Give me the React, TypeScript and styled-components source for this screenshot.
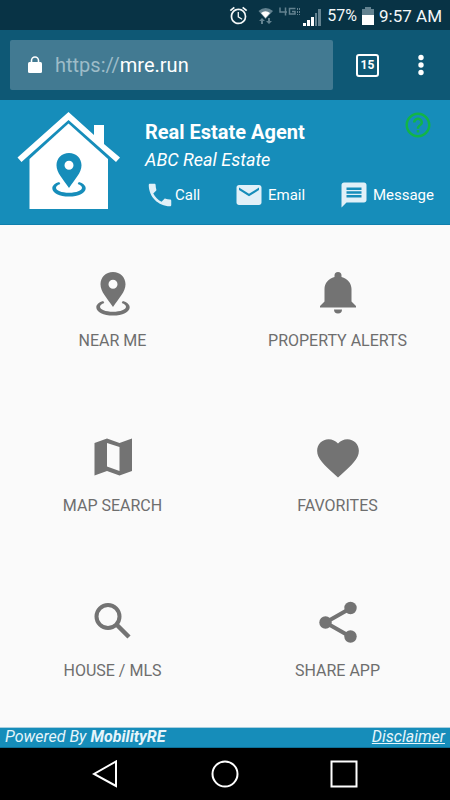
import React from "react";
import styled, { createGlobalStyle } from "styled-components";

const GlobalStyle = createGlobalStyle`
  *, *::before, *::after { box-sizing: border-box; }
  body { margin: 0; background: #fafafa; font-family: Roboto, sans-serif; }
  button { border: 0; padding: 0; margin: 0; background: none; font: inherit; color: inherit; cursor: pointer; }
  svg { display: block; flex: none; }
`;

const Screen = styled.div`
  display: flex;
  flex-direction: column;
  min-height: 100vh;
`;

const StatusBar = styled.div`
  display: flex;
  align-items: center;
  justify-content: flex-end;
  height: 30px;
  padding: 1px 8px 0 0;
  background: #083345;
  color: #f4f8f9;
`;

const Battery = styled.span`
  margin: 0 5px 0 4px;
  font-size: 16px;
  display: flex;
  align-items: center;
  gap: 5px;
`;

const Clock = styled.span`
  font-size: 17px;
`;

const StatusIcons = styled.div`
  display: flex;
  align-items: center;
  gap: 6px;
`;

const BrowserBar = styled.div`
  display: flex;
  align-items: center;
  height: 70px;
  padding: 0 19px 0 10px;
  background: #0e5875;
  color: #fff;
`;

const AddressField = styled.label`
  display: flex;
  align-items: center;
  flex: 1;
  min-width: 0;
  height: 50px;
  padding-left: 18px;
  border-radius: 2px;
  background: #427a92;
  font-size: 20px;
`;

const Scheme = styled.span`
  margin-left: 13px;
  color: #9dbcc8;
`;

const AddressInput = styled.input`
  flex: 1;
  min-width: 0;
  padding: 0;
  border: 0;
  outline: 0;
  background: transparent;
  color: #fff;
  font: inherit;
`;

const TabCount = styled.button`
  margin: 0 32px 0 23px;
`;

const TabFrame = styled.span`
  display: block;
  width: 23px;
  height: 23px;
  border: 2px solid #fff;
  border-radius: 3px;
  font-size: 12px;
  font-weight: 700;
  line-height: 19px;
`;

const AgentHeader = styled.header`
  display: flex;
  align-items: flex-start;
  height: 125px;
  padding: 11px 16px 0 17px;
  background: #168dba;
  border-bottom: 1px solid #0f7fad;
  color: #fff;
`;

const AgentDetails = styled.div`
  flex: 1;
  min-width: 0;
  padding-top: 8px;
  margin-left: 24px;
`;

const AgentTop = styled.div`
  display: flex;
  justify-content: space-between;
`;

const AgentName = styled.h1`
  margin: 0;
  font-size: 20px;
  line-height: 26px;
  font-weight: 700;
`;

const HelpButton = styled.button`
  height: 26px;
  margin: -9px 1px 0 0;
  color: #12b546;
`;

const Company = styled.p`
  margin: 2px 0 0;
  font-size: 18px;
  line-height: 26px;
  font-style: italic;
`;

const ContactRow = styled.div`
  display: flex;
  justify-content: space-between;
  margin-top: 7px;
`;

const ContactButton = styled.button<{ $gap: number }>`
  display: flex;
  align-items: center;
  gap: ${(p) => p.$gap}px;
  height: 30px;
  font-size: 15px;

  svg { color: #e1f0f8; }
`;

const Menu = styled.main`
  display: grid;
  flex: 1;
  grid-template-columns: 1fr 1fr;
  grid-auto-rows: 1fr;
  padding: 3px 0 4px;
  background: #fafafa;
`;

const MenuItem = styled.button`
  display: flex;
  flex-direction: column;
  align-items: center;
  justify-content: center;
  gap: 13px;
  color: #6e6e6e;
  font-size: 16px;
  line-height: 22px;

  svg { color: #737373; }
`;

const Footer = styled.footer`
  display: flex;
  align-items: center;
  justify-content: space-between;
  height: 21px;
  padding: 0 5px 2px;
  background: #168dba;
  border-top: 1px solid #a9cfdf;
  border-bottom: 1px solid #0d6f97;
  color: #e6f5fb;
  font-size: 16px;
  line-height: 18px;
  font-style: italic;
`;

const FooterLink = styled.a`
  color: inherit;
`;

const SystemNav = styled.nav`
  display: grid;
  grid-template-columns: repeat(3, 119px);
  justify-content: center;
  height: 52px;
  background: #000;
  color: #fff;
`;

const NavButton = styled.button`
  display: grid;
  place-items: center;
`;

type IconProps = { d: string; size: number; viewBox?: string };

const Glyph = ({ d, size, viewBox = "0 0 24 24" }: IconProps) => (
  <svg width={size} height={size} viewBox={viewBox} fill="currentColor" aria-hidden="true">
    <path d={d} />
  </svg>
);

const paths = {
  alarm:
    "M22 5.72l-4.6-3.86-1.29 1.53 4.6 3.86L22 5.72zM7.88 3.39L6.6 1.86 2 5.71l1.29 1.53 4.59-3.85zM12.5 8H11v6l4.75 2.85.75-1.23-4-2.37V8zM12 4c-4.97 0-9 4.03-9 9s4.02 9 9 9a9 9 0 0 0 0-18zm0 16c-3.87 0-7-3.13-7-7s3.13-7 7-7 7 3.13 7 7-3.13 7-7 7z",
  phone:
    "M6.62 10.79c1.44 2.83 3.76 5.14 6.59 6.59l2.2-2.2c.27-.27.67-.36 1.02-.24 1.12.37 2.33.57 3.57.57.55 0 1 .45 1 1V20c0 .55-.45 1-1 1-9.39 0-17-7.61-17-17 0-.55.45-1 1-1h3.5c.55 0 1 .45 1 1 0 1.25.2 2.45.57 3.57.11.35.03.74-.25 1.02l-2.2 2.2z",
  email:
    "M20 4H4c-1.1 0-1.99.9-1.99 2L2 18c0 1.1.9 2 2 2h16c1.1 0 2-.9 2-2V6c0-1.1-.9-2-2-2zm0 4l-8 5-8-5V6l8 5 8-5v2z",
  message:
    "M20 2H4c-1.1 0-1.99.9-1.99 2L2 22l4-4h14c1.1 0 2-.9 2-2V4c0-1.1-.9-2-2-2zM6 6h12v2H6ZM6 9h12v2H6ZM6 12h12v2H6Z",
  help:
    "M11 18h2v-2h-2v2zm1-16C6.48 2 2 6.48 2 12s4.48 10 10 10 10-4.48 10-10S17.52 2 12 2zm0 18c-4.41 0-8-3.59-8-8s3.59-8 8-8 8 3.59 8 8-3.59 8-8 8zm0-14c-2.21 0-4 1.79-4 4h2c0-1.1.9-2 2-2s2 .9 2 2c0 2-3 1.75-3 5h2c0-2.25 3-2.5 3-5 0-2.21-1.79-4-4-4z",
  heart:
    "M12 21.35l-1.45-1.32C5.4 15.36 2 12.28 2 8.5 2 5.42 4.42 3 7.5 3c1.74 0 3.41.81 4.5 2.09C13.09 3.81 14.76 3 16.5 3 19.58 3 22 5.42 22 8.5c0 3.78-3.4 6.86-8.55 11.54L12 21.35z",
};

const Pin = () => (
  <>
    <path d="M17 0C9.8 0 4.5 5.3 4.5 12.3C4.5 20 11 26 17 35C23 26 29.5 20 29.5 12.3C29.5 5.3 24.2 0 17 0ZM17 7.8A4.5 4.5 0 1 1 17 16.8A4.5 4.5 0 1 1 17 7.8Z" fillRule="evenodd" />
    <path d="M7.2 28.9C3 30 0.3 32.5 0.3 35.2C0.3 40 7.5 43.5 17 43.5S33.7 40 33.7 35.2C33.7 32.5 31 30 26.8 28.9L25.7 31C28.5 32 30 33.3 30 34.7C30 37.5 24.5 39.7 17 39.7S4 37.5 4 34.7C4 33.3 5.5 32 8.3 31Z" />
  </>
);

const NearMeIcon = () => (
  <svg width="48" height="48" viewBox="-7 -3 48 48" fill="currentColor" aria-hidden="true">
    <Pin />
  </svg>
);

const BellIcon = () => (
  <svg width="48" height="48" viewBox="0 0 48 48" fill="currentColor" aria-hidden="true">
    <path d="M24 3a3.5 3.5 0 0 0-3.5 3.5v1.4C14.5 9.5 10.5 14 10.5 20v12.5L6 37v1.5h36V37l-4.500-4.500V20c0-6-4-10.500-10-12.100V6.500A3.500 3.500 0 0 0 24 3ZM20 40.500h8a4 4 0 0 1-8 0Z" />
  </svg>
);

const MapIcon = () => (
  <svg width="48" height="48" viewBox="0 0 48 48" fill="currentColor" aria-hidden="true">
    <path d="M5.5 9L18 4.5L30.5 9L43 4.5V37L30.5 41.5L18 37L5.5 41.5ZM18 9V32.5L30.5 37V13Z" fillRule="evenodd" />
  </svg>
);

const SearchIcon = () => (
  <svg width="48" height="48" viewBox="0 0 48 48" fill="none" stroke="currentColor" strokeWidth="4" aria-hidden="true">
    <circle cx="19" cy="17.5" r="11.5" />
    <path d="M27.5 25.5L40 38" strokeWidth="4.5" />
  </svg>
);

const ShareIcon = () => (
  <svg width="48" height="48" viewBox="0 0 48 48" fill="currentColor" aria-hidden="true">
    <path d="M37 9L11.5 23.5L37 38" fill="none" stroke="currentColor" strokeWidth="4" />
    <circle cx="36.5" cy="9" r="6.2" />
    <circle cx="11.5" cy="23.5" r="6.2" />
    <circle cx="36.5" cy="37.5" r="6.2" />
  </svg>
);

const HouseLogo = () => (
  <svg width="104" height="99" viewBox="17 111 104 99" fill="#fff" aria-hidden="true">
    <path d="M68.5 112L94 135V125H104V144L120 157.5L116 162L68.5 120L21.5 162L17.5 157.5Z" />
    <path d="M68.5 123.5L108 159V209H29.5V159Z" />
    <g fill="#168dba" transform="translate(52 153)">
      <Pin />
    </g>
  </svg>
);

const SignalIcons = () => (
  <svg width="68" height="26" viewBox="256 2 68 26" role="img" aria-label="Wi-Fi, 4G LTE, signal strength">
    <path d="M259.5 10Q266.5 4 274 10L266.5 18Z" fill="#638290" />
    <path d="M262 12Q266.5 8.5 271 12L266.5 17Z" fill="#fff" />
    <path d="M263 17l3 3h-2v3h-2v-3h-2ZM270 23l3-3h-2v-3h-2v3h-2Z" fill="#638290" />
    <g stroke="#638290" fill="none" strokeWidth="1.5">
      <path d="M281 6.5v4.5h7M286.5 6.5v8M296.500 7.500h-6v5.500h5.500v-2.500h-3" />
      <path d="M298.5 7v7M300.5 7v7" strokeWidth="1" strokeDasharray="2 1" />
    </g>
    <g fill="#fff">
      <path d="M304 22h3v3h-3ZM308 19h3v6h-3ZM312 16h3v9h-3Z" />
      <path d="M316 12h2v13h-2ZM319 8h3v17h-3Z" fill="#638290" />
    </g>
  </svg>
);

const menu = [
  { label: "NEAR ME", icon: <NearMeIcon /> },
  { label: "PROPERTY ALERTS", icon: <BellIcon /> },
  { label: "MAP SEARCH", icon: <MapIcon /> },
  { label: "FAVORITES", icon: <Glyph d={paths.heart} size={48} viewBox="0.5 0.5 23 23" /> },
  { label: "HOUSE / MLS", icon: <SearchIcon /> },
  { label: "SHARE APP", icon: <ShareIcon /> },
];

export default function App() {
  return (
    <Screen>
      <GlobalStyle />
      <StatusBar>
        <StatusIcons>
          <Glyph d={paths.alarm} size={21} />
          <SignalIcons />
        </StatusIcons>
        <Battery>
          57%
          <svg width="12" height="18" viewBox="0 0 12 18" aria-hidden="true">
            <path d="M3 0h6v2h3v16H0V2h3Z" fill="#638290" />
            <path d="M0 8h12v10H0Z" fill="#fff" />
          </svg>
        </Battery>
        <Clock>9:57 AM</Clock>
      </StatusBar>

      <BrowserBar>
        <AddressField>
          <svg width="14" height="18" viewBox="0 0 14 18" aria-hidden="true">
            <rect y="6" width="14" height="11" rx="1.5" fill="#fff" />
            <path d="M3.5 7V4.5a3.5 3.5 0 0 1 7 0V7" fill="none" stroke="#fff" strokeWidth="1.6" />
          </svg>
          <Scheme>https://</Scheme>
          <AddressInput aria-label="Address" defaultValue="mre.run" />
        </AddressField>
        <TabCount aria-label="15 open tabs">
          <TabFrame>15</TabFrame>
        </TabCount>
        <button aria-label="More options">
          <svg width="20" height="24" viewBox="0 0 20 24" fill="#fff" aria-hidden="true">
            <circle cx="10" cy="4.5" r="2.7" />
            <circle cx="10" cy="12" r="2.7" />
            <circle cx="10" cy="19.5" r="2.7" />
          </svg>
        </button>
      </BrowserBar>

      <AgentHeader>
        <HouseLogo />
        <AgentDetails>
          <AgentTop>
            <AgentName>Real Estate Agent</AgentName>
            <HelpButton aria-label="Help">
              <Glyph d={paths.help} size={30} />
            </HelpButton>
          </AgentTop>
          <Company>ABC Real Estate</Company>
          <ContactRow>
            <ContactButton $gap={0}>
              <Glyph d={paths.phone} size={30} />
              Call
            </ContactButton>
            <ContactButton $gap={4}>
              <Glyph d={paths.email} size={30} />
              Email
            </ContactButton>
            <ContactButton $gap={4}>
              <Glyph d={paths.message} size={30} />
              Message
            </ContactButton>
          </ContactRow>
        </AgentDetails>
      </AgentHeader>

      <Menu>
        {menu.map(({ label, icon }) => (
          <MenuItem key={label}>
            {icon}
            {label}
          </MenuItem>
        ))}
      </Menu>

      <Footer>
        <span>
          Powered By <strong>MobilityRE</strong>
        </span>
        <FooterLink href="#disclaimer">Disclaimer</FooterLink>
      </Footer>

      <SystemNav>
        <NavButton aria-label="Back">
          <svg width="28" height="28" viewBox="0 0 28 28" fill="none" stroke="#fff" strokeWidth="2" aria-hidden="true">
            <path d="M24 1.5V26L2 14Z" />
          </svg>
        </NavButton>
        <NavButton aria-label="Home">
          <svg width="28" height="28" viewBox="0 0 28 28" fill="none" stroke="#fff" strokeWidth="2" aria-hidden="true">
            <circle cx="14" cy="14" r="12.5" />
          </svg>
        </NavButton>
        <NavButton aria-label="Recent apps">
          <svg width="28" height="28" viewBox="0 0 28 28" fill="none" stroke="#fff" strokeWidth="2" aria-hidden="true">
            <rect x="1.5" y="1.5" width="25" height="25" />
          </svg>
        </NavButton>
      </SystemNav>
    </Screen>
  );
}
